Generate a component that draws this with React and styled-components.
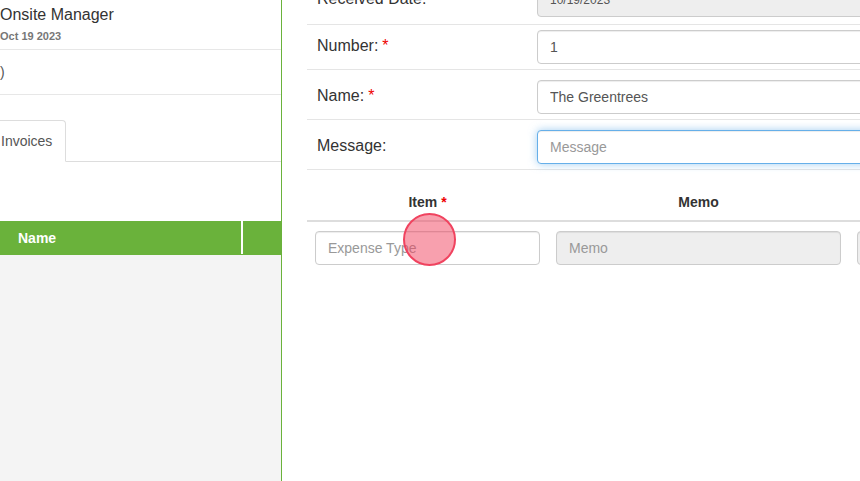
import styled, { createGlobalStyle } from "styled-components";

const GlobalStyle = createGlobalStyle`
    html, body {
        margin: 0;
        padding: 0;
        background: #fff;
        overflow: hidden;
    }
    body {
        font-family: "Liberation Sans", Arial, sans-serif;
        color: #333;
    }
    * {
        box-sizing: border-box;
    }
`;

const Page = styled.div`
    display: flex;
    width: 860px;
    height: 481px;
    overflow: hidden;
`;

const Sidebar = styled.aside`
    width: 282px;
    flex-shrink: 0;
    border-right: 1px solid #6ab23b;
    display: flex;
    flex-direction: column;
    background: #fff;
`;

const Profile = styled.div`
    padding: 5px 0 6px;
    border-bottom: 1px solid #e7e7e7;
`;

const ProfileName = styled.div`
    font-size: 16px;
    line-height: 20px;
    color: #333;
`;

const ProfileDate = styled.div`
    margin-top: 4px;
    font-size: 11px;
    line-height: 14px;
    font-weight: bold;
    color: #777;
`;

const InfoRow = styled.div`
    padding: 12px 0;
    font-size: 14px;
    line-height: 20px;
    color: #555;
    border-bottom: 1px solid #e7e7e7;
`;

const Tabs = styled.ul`
    list-style: none;
    margin: 25px 0 0;
    padding: 0;
    display: flex;
    border-bottom: 1px solid #ddd;
`;

const Tab = styled.li`
    margin: 0 0 -1px -16px;
    padding: 10px 13px 10px 16px;
    font-size: 14px;
    line-height: 20px;
    color: #555;
    background: #fff;
    border: 1px solid #ddd;
    border-bottom-color: transparent;
    border-radius: 0 4px 0 0;
`;

const GridHead = styled.div`
    margin-top: 59px;
    display: grid;
    grid-template-columns: 241px 1fr;
    background: #6ab23b;
    height: 34px;
`;

const GridHeadCell = styled.div`
    padding: 0 18px;
    display: flex;
    align-items: center;
    font-size: 14px;
    font-weight: bold;
    color: #fff;
    border-left: ${(p) => (p.$divider ? "2px solid #fff" : "none")};
    margin: ${(p) => (p.$divider ? "0 0 1px" : "0")};
`;

const GridBody = styled.div`
    flex: 1;
    background: #f4f4f4;
`;

const Main = styled.main`
    position: relative;
    flex: 1;
    padding-left: 25px;
    overflow: hidden;
`;

const Form = styled.div`
    width: 900px;
    margin-top: -27px;
`;

const FormRow = styled.div`
    display: grid;
    grid-template-columns: 230px 1fr;
    padding: ${(p) => p.$pad || "10px 0 5px"};
    border-bottom: 1px solid #e5e5e5;
`;

const Label = styled.label`
    padding: 6px 0 0 10px;
    font-size: 16px;
    line-height: 20px;
    color: #333;
`;

const Required = styled.span`
    color: #e00;
    margin-left: 4px;
`;

const Input = styled.input`
    display: block;
    width: 100%;
    height: 34px;
    padding: 6px 12px;
    font-family: "Liberation Sans", Arial, sans-serif;
    font-size: ${(p) => (p.$small ? "12px" : "14px")};
    line-height: 20px;
    color: #555;
    background: ${(p) => (p.disabled ? "#eee" : "#fff")};
    border: 1px solid ${(p) => (p.$focus ? "#66afe9" : "#ccc")};
    border-radius: 4px;
    outline: none;
    box-shadow: ${(p) =>
        p.$focus
            ? "inset 0 1px 1px rgba(0,0,0,.075), 0 0 8px rgba(102,175,233,.6)"
            : "inset 0 1px 1px rgba(0,0,0,.075)"};

    &::placeholder {
        color: #999;
        opacity: 1;
    }

    &:disabled {
        color: #555;
    }
`;

const Table = styled.div`
    width: 900px;
    margin-top: 14px;
    display: grid;
    grid-template-columns: 241px 301px 1fr;
`;

const HeadCell = styled.div`
    padding: 8px;
    font-size: 14px;
    font-weight: bold;
    line-height: 20px;
    text-align: center;
    color: #333;
    border-bottom: 2px solid #ddd;
`;

const Cell = styled.div`
    padding: 9px 8px 8px;
`;

const ClickMarker = styled.div`
    position: absolute;
    left: 121px;
    top: 213px;
    width: 53px;
    height: 53px;
    border-radius: 50%;
    background: rgba(242, 66, 94, 0.5);
    border: 2px solid #f0435f;
    pointer-events: none;
`;

export default function App() {
    return (
        <>
            <GlobalStyle />
            <Page>
                <Sidebar>
                    <Profile>
                        <ProfileName>Onsite Manager</ProfileName>
                        <ProfileDate>Oct 19 2023</ProfileDate>
                    </Profile>
                    <InfoRow>)</InfoRow>
                    <Tabs>
                        <Tab>Invoices</Tab>
                    </Tabs>
                    <GridHead>
                        <GridHeadCell>Name</GridHeadCell>
                        <GridHeadCell $divider />
                    </GridHead>
                    <GridBody />
                </Sidebar>

                <Main>
                    <Form>
                        <FormRow $pad="10px 0 7px">
                            <Label>Received Date:</Label>
                            <Input $small disabled value="10/19/2023" readOnly />
                        </FormRow>
                        <FormRow $pad="5px 0 5px">
                            <Label>
                                Number:<Required>*</Required>
                            </Label>
                            <Input defaultValue="1" />
                        </FormRow>
                        <FormRow>
                            <Label>
                                Name:<Required>*</Required>
                            </Label>
                            <Input defaultValue="The Greentrees" />
                        </FormRow>
                        <FormRow>
                            <Label>Message:</Label>
                            <Input $focus placeholder="Message" />
                        </FormRow>
                    </Form>

                    <Table>
                        <HeadCell>
                            Item<Required>*</Required>
                        </HeadCell>
                        <HeadCell>Memo</HeadCell>
                        <HeadCell />
                        <Cell>
                            <Input placeholder="Expense Type" />
                        </Cell>
                        <Cell>
                            <Input disabled placeholder="Memo" />
                        </Cell>
                        <Cell>
                            <Input disabled />
                        </Cell>
                    </Table>

                    <ClickMarker />
                </Main>
            </Page>
        </>
    );
}
